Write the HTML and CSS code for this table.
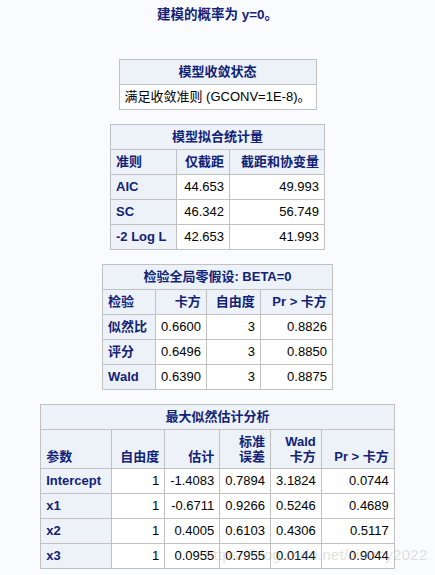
FILE: index.html
```html
<!DOCTYPE html>
<html lang="zh-CN">
<head>
<meta charset="utf-8">
<title>SAS Output</title>
<link rel="stylesheet" href="styles.css">
</head>
<body>
<div class="page">
  <p class="title">建模的概率为 y=0。</p>

  <table class="sas">
    <tr><th class="cap w186">模型收敛状态</th></tr>
    <tr><td class="l">满足收敛准则 (GCONV=1E-8)。</td></tr>
  </table>

  <table class="sas">
    <tr><th class="cap" colspan="3">模型拟合统计量</th></tr>
    <tr><th class="l w55">准则</th><th class="r w42">仅截距</th><th class="r w84">截距和协变量</th></tr>
    <tr><th class="l">AIC</th><td>44.653</td><td>49.993</td></tr>
    <tr><th class="l">SC</th><td>46.342</td><td>56.749</td></tr>
    <tr><th class="l">-2 Log L</th><td>42.653</td><td>41.993</td></tr>
  </table>

  <table class="sas">
    <tr><th class="cap" colspan="4">检验全局零假设: BETA=0</th></tr>
    <tr><th class="l w42">检验</th><th class="r w39">卡方</th><th class="r w43">自由度</th><th class="r w61">Pr &gt; 卡方</th></tr>
    <tr><th class="l">似然比</th><td>0.6600</td><td>3</td><td>0.8826</td></tr>
    <tr><th class="l">评分</th><td>0.6496</td><td>3</td><td>0.8850</td></tr>
    <tr><th class="l">Wald</th><td>0.6390</td><td>3</td><td>0.8875</td></tr>
  </table>

  <table class="sas">
    <tr><th class="cap" colspan="6">最大似然估计分析</th></tr>
    <tr class="hdr2">
      <th class="l w60">参数</th>
      <th class="r w42">自由度</th>
      <th class="r w43">估计</th>
      <th class="r w39">标准<br>误差</th>
      <th class="r w39">Wald<br>卡方</th>
      <th class="r w62">Pr &gt; 卡方</th>
    </tr>
    <tr><th class="l">Intercept</th><td>1</td><td>-1.4083</td><td>0.7894</td><td>3.1824</td><td>0.0744</td></tr>
    <tr><th class="l">x1</th><td>1</td><td>-0.6711</td><td>0.9266</td><td>0.5246</td><td>0.4689</td></tr>
    <tr><th class="l">x2</th><td>1</td><td>0.4005</td><td>0.6103</td><td>0.4306</td><td>0.5117</td></tr>
    <tr><th class="l">x3</th><td>1</td><td>0.0955</td><td>0.7955</td><td>0.0144</td><td>0.9044</td></tr>
  </table>
</div>
<div class="watermark">https://blog.csdn.net/Jimmy2022</div>
</body>
</html>
```
FILE: styles.css
```css
html, body {
  margin: 0;
  padding: 0;
  background: #fafbfe;
}

body {
  font-family: "Liberation Sans", Arial, "Noto Sans CJK SC", sans-serif;
  font-size: 13px;
  color: #000;
  position: relative;
  min-height: 575px;
}

.page {
  display: flex;
  flex-direction: column;
  align-items: center;
  gap: 14px;
  padding-top: 7px;
}

.title {
  margin: 0 0 22px 0;
  line-height: 16px;
  font-size: 13.5px;
  font-weight: bold;
  color: #112277;
}

.sas {
  border-collapse: collapse;
  border: 1px solid #c1c1c1;
  background: #fff;
}

.sas th,
.sas td {
  border: 1px solid #c1c1c1;
  padding: 4px 5px;
  line-height: 16px;
  white-space: nowrap;
}

.sas th {
  background: #edf2f9;
  color: #112277;
  font-weight: bold;
}

.sas td {
  background: #fff;
  text-align: right;
}

.sas .cap {
  text-align: center;
}

.sas .l {
  text-align: left;
}

.sas .r {
  text-align: right;
}

.w39 { width: 39px; }
.w42 { width: 42px; }
.w43 { width: 43px; }
.w55 { width: 55px; }
.w60 { width: 60px; }
.w61 { width: 61px; }
.w62 { width: 62px; }
.w84 { width: 84px; }
.w186 { width: 186px; }

.hdr2 th {
  vertical-align: bottom;
  line-height: 15px;
}

.watermark {
  position: absolute;
  left: 205px;
  top: 546px;
  font-size: 15.5px;
  color: rgba(150, 150, 150, 0.3);
  white-space: nowrap;
  pointer-events: none;
}
```
